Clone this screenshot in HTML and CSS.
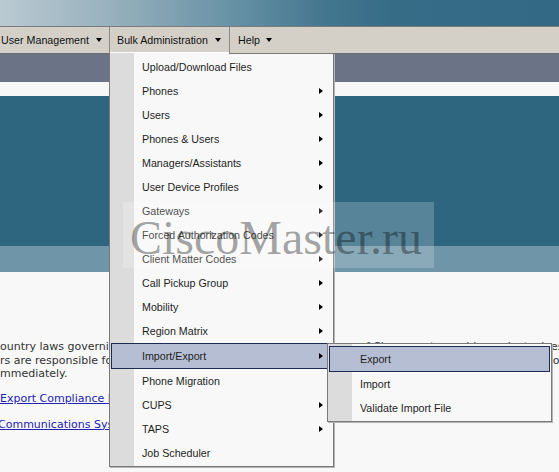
FILE: index.html
```html
<!DOCTYPE html>
<html>
<head>
<meta charset="utf-8">
<title>Bulk Administration</title>
<link rel="stylesheet" href="styles.css">
</head>
<body>
<div class="page">
  <div class="topbar"></div>
  <nav class="menubar">
    <div class="tab tab-user"><span>User Management</span><i class="caret"></i></div>
    <div class="tab tab-bulk active"><span>Bulk Administration</span><i class="caret"></i></div>
    <div class="tab tab-help"><span>Help</span><i class="caret"></i></div>
  </nav>
  <div class="band band-slate"></div>
  <div class="band band-white"></div>
  <div class="band band-teal"></div>
  <div class="band band-teal-light"></div>
  <div class="content">
    <p class="notice">ountry laws governing import, export, transfer and use. Delivery of Cisco cryptographic products does not imply third-party authority<br>rs are responsible for compliance with U.S. and local country laws. By using this product you agree to comply with applicable laws and regulations<br>mmediately.</p>
    <p class="link-line"><a href="#">Export Compliance Product Report</a></p>
    <p class="link-line link-cut"><a href="#">Communications System Release Notes</a></p>
  </div>

  <div class="dropdown main-menu">
    <div class="item">Upload/Download Files</div>
    <div class="item sub">Phones</div>
    <div class="item sub">Users</div>
    <div class="item sub">Phones &amp; Users</div>
    <div class="item sub">Managers/Assistants</div>
    <div class="item sub">User Device Profiles</div>
    <div class="item sub">Gateways</div>
    <div class="item sub">Forced Authorization Codes</div>
    <div class="item sub">Client Matter Codes</div>
    <div class="item sub">Call Pickup Group</div>
    <div class="item sub">Mobility</div>
    <div class="item sub">Region Matrix</div>
    <div class="item sub hl">Import/Export</div>
    <div class="item">Phone Migration</div>
    <div class="item sub">CUPS</div>
    <div class="item sub">TAPS</div>
    <div class="item">Job Scheduler</div>
  </div>

  <div class="dropdown sub-menu">
    <div class="item hl">Export</div>
    <div class="item">Import</div>
    <div class="item">Validate Import File</div>
  </div>

  <div class="watermark">CiscoMaster.ru</div>
</div>
</body>
</html>
```

FILE: styles.css
```css
html, body {
  margin: 0;
  padding: 0;
}
body {
  background: #f8f8f8;
  width: 559px;
  height: 472px;
  overflow: hidden;
  font-family: "Liberation Sans", Arial, sans-serif;
}
.page {
  position: relative;
  width: 559px;
  height: 472px;
  overflow: hidden;
}
.topbar {
  height: 26px;
  background: linear-gradient(to right, #bacad2 0%, #93aebb 22%, #5f8ca1 45%, #44778f 58%, #376c87 70%, #336985 100%);
}
.menubar {
  display: flex;
  height: 26px;
  background: #d4d0c8;
  border-top: 1px solid #7b7b7b;
  border-bottom: 1px solid #6c6c6c;
  font-size: 10.7px;
  color: #111;
}
.tab {
  display: flex;
  align-items: center;
  box-sizing: border-box;
  height: 26px;
  position: relative;
}
.tab-user {
  width: 110px;
  padding-left: 1px;
  border-right: 1px solid #8c8a86;
}
.tab-bulk {
  width: 120px;
  padding-left: 7px;
  border-right: 1px solid #8c8a86;
}
.tab-help {
  padding-left: 8px;
}
.tab.active::after {
  content: "";
  position: absolute;
  left: 0;
  right: 0;
  bottom: -1px;
  height: 1px;
  background: linear-gradient(to right, #dcdcdc 24px, #f8f8f8 24px);
  z-index: 5;
}
.tab.active::before {
  content: "";
  position: absolute;
  left: 0;
  right: 0;
  bottom: 0;
  height: 1px;
  background: #ffffff;
}
.caret {
  display: block;
  width: 0;
  height: 0;
  margin-left: 7px;
  border-left: 3.5px solid transparent;
  border-right: 3.5px solid transparent;
  border-top: 4px solid #000;
}
.tab-help .caret {
  margin-left: 6px;
}
.band-slate { height: 28px; background: #6b7386; }
.band-white { height: 14px; background: #f7f7f7; }
.band-teal { height: 150px; background: #2e6680; }
.band-teal-light { height: 26px; background: #6f95a8; }

.content {
  padding-top: 68px;
  font-family: "DejaVu Sans", Verdana, sans-serif;
  font-size: 11px;
  color: #333;
}
.notice {
  margin: 0;
  line-height: 13.5px;
  white-space: nowrap;
}
.link-line {
  margin: 0;
  line-height: 13.5px;
  white-space: nowrap;
}
.notice + .link-line {
  margin-top: 11px;
}
.link-line + .link-line {
  margin-top: 12.5px;
}
.link-cut {
  margin-left: -2px;
}
.link-line a {
  color: #2222b0;
  text-decoration: underline;
}

.dropdown {
  position: absolute;
  box-sizing: border-box;
  background: linear-gradient(to right, #dcdcdc 24px, #f8f8f8 24px);
  border: 1px solid #7a7a7a;
  box-shadow: 1px 1px 0 #b4b4b4;
  font-size: 10.7px;
  color: #1e1e1e;
}
.main-menu {
  left: 109px;
  top: 53px;
  width: 225px;
  padding: 1px 0 1px 0;
  z-index: 2;
}
.sub-menu {
  left: 327px;
  top: 343px;
  width: 225px;
  padding: 1px 0 1px 0;
  z-index: 3;
}
.item {
  position: relative;
  height: 24px;
  line-height: 24px;
  padding: 0 10px 0 32px;
  white-space: nowrap;
}
.item.sub::after {
  content: "";
  position: absolute;
  right: 10px;
  top: 8.5px;
  width: 0;
  height: 0;
  border-top: 3.5px solid transparent;
  border-bottom: 3.5px solid transparent;
  border-left: 4px solid #000;
}
.main-menu .item.hl {
  margin: 0 4px 0 1px;
  padding: 0 5px 0 30px;
  border: 1px solid #1c2a55;
  background: #b6bed4;
}
.main-menu .item.hl::after {
  right: 5px;
}
.sub-menu .item.hl {
  margin: 1px 1px 0 1px;
  padding: 0 5px 0 30px;
  border: 1px solid #1c2a55;
  background: #b6bed4;
}
.watermark {
  position: absolute;
  left: 123px;
  top: 202px;
  width: 311px;
  height: 66px;
  box-sizing: border-box;
  padding: 6px 0 0 7px;
  background: rgba(255, 255, 255, 0.2);
  font-family: "Liberation Serif", "Times New Roman", serif;
  font-size: 48px;
  line-height: 60px;
  color: rgba(0, 0, 0, 0.36);
  white-space: nowrap;
  z-index: 10;
}
```
